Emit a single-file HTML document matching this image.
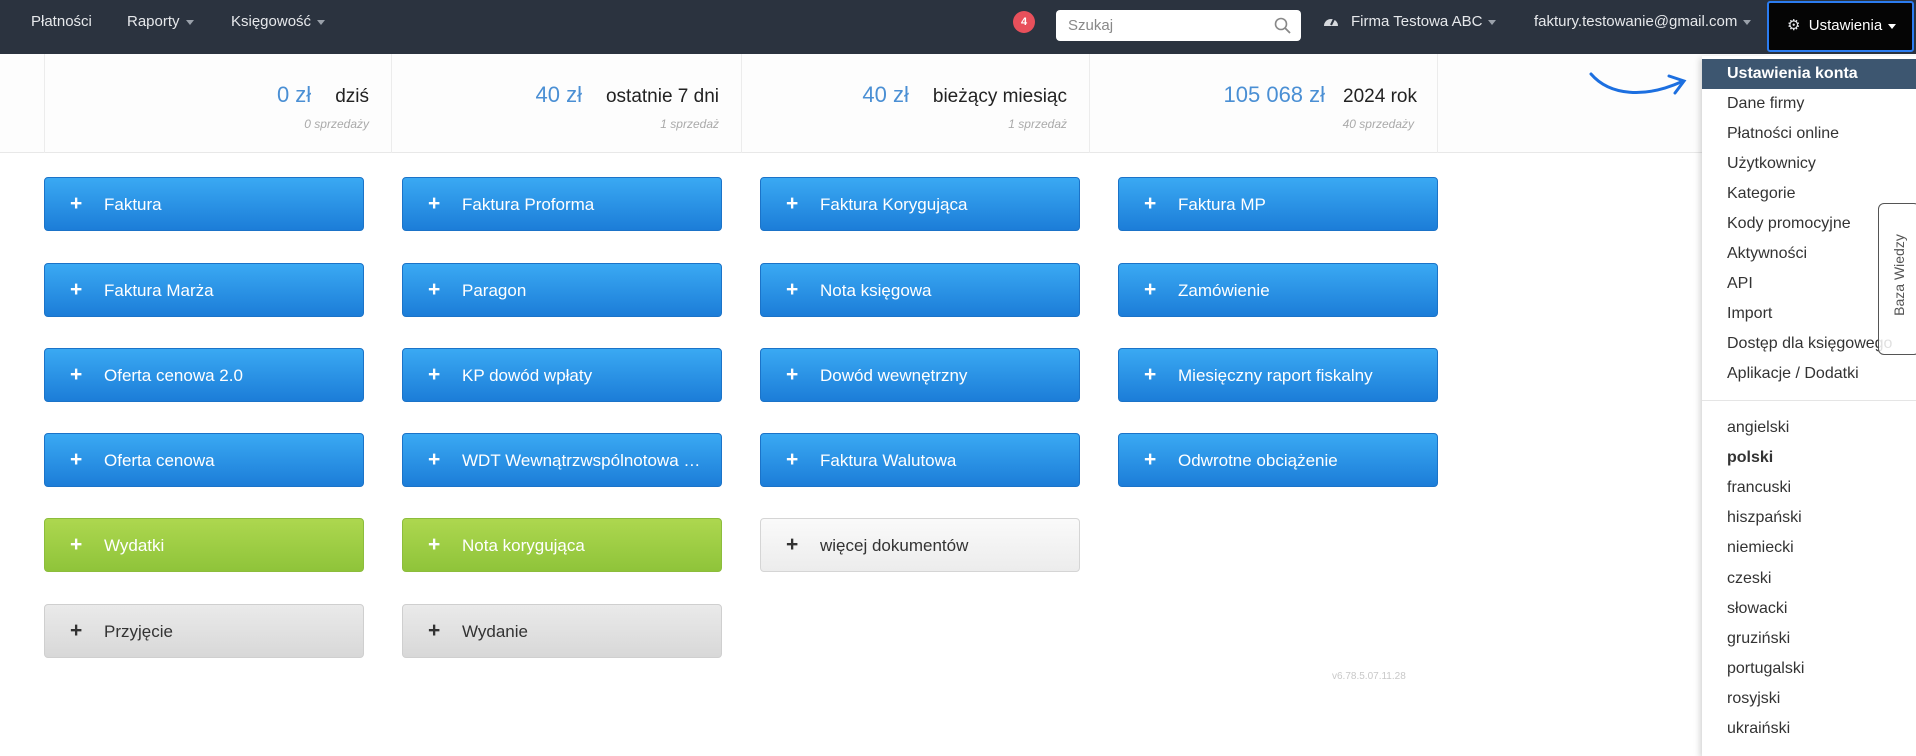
<!DOCTYPE html>
<html><head><meta charset="utf-8"><style>
*{box-sizing:border-box;margin:0;padding:0}
body{width:1916px;height:750px;overflow:hidden;background:#fff;font-family:"Liberation Sans",sans-serif;position:relative}
.nav{position:absolute;left:0;top:0;width:1916px;height:54px;background:#2b333f}
.nav span{position:absolute;top:0;line-height:44px;color:#e6e8eb;font-size:15px}
.car{display:inline-block;border-left:4px solid transparent;border-right:4px solid transparent;border-top:5px solid #9aa1aa;margin-left:6px;vertical-align:middle}
.stats{position:absolute;left:0;top:54px;width:1916px;height:99px;background:#fdfdfd;border-bottom:1px solid #e8e8e8}
.col{position:absolute;top:0;height:99px;border-left:1px solid #ececec}
.row{position:absolute;right:22px;top:28px;display:flex;align-items:baseline;white-space:nowrap}
.v{font-size:22px;color:#4a8fd4;margin-right:24px}
.l{font-size:19px;color:#222}
.s{position:absolute;right:22px;top:63px;font-size:12px;color:#aaa;font-style:italic;white-space:nowrap}
.b{position:absolute;width:320px;height:54px;border-radius:4px;color:#fff;font-size:17px;line-height:54px;padding-left:59px;background:linear-gradient(#3aa9f3,#1c7dd8);border:1px solid #1b73c8;white-space:nowrap;overflow:hidden}
.b:before{content:"+";position:absolute;left:25px;top:-1px;font-weight:bold;font-size:21px}
.g{background:linear-gradient(#add74f,#8fc43a);border-color:#8cbd3c}
.w{background:linear-gradient(#fafafa,#ececec);border-color:#d5d5d5;color:#333}
.gr{background:linear-gradient(#eaeaea,#d8d8d8);border-color:#cfcfcf;color:#333}
.dd{position:absolute;left:1702px;top:56px;width:214px;height:700px;background:#fff;box-shadow:-2px 2px 6px rgba(0,0,0,.18)}
.dd div{position:absolute;left:0;width:214px;height:30px;line-height:30px;padding-left:25px;font-size:16px;color:#333}
</style></head><body>
<div class="nav">
<span style="left:31px">Płatności</span>
<span style="left:127px">Raporty<i class="car"></i></span>
<span style="left:231px">Księgowość<i class="car"></i></span>
<div style="position:absolute;left:1013px;top:11px;width:22px;height:22px;border-radius:50%;background:#e8505b;color:#fff;font-size:11px;font-weight:bold;text-align:center;line-height:22px">4</div>
<div style="position:absolute;left:1056px;top:10px;width:245px;height:31px;background:#fff;border-radius:4px;color:#888;font-size:15px;line-height:31px;padding-left:12px">Szukaj
<svg style="position:absolute;right:10px;top:7px" width="17" height="17" viewBox="0 0 17 17"><circle cx="7" cy="7" r="5.5" fill="none" stroke="#888" stroke-width="1.6"/><path d="M11 11l5 5" stroke="#888" stroke-width="1.8"/></svg></div>
<span style="left:1323px"><svg width="16" height="14" viewBox="0 0 16 14" style="vertical-align:-2px"><path d="M1 12A7 7 0 0 1 15 12Z" fill="#d6d9dd"/><path d="M8 11L11 5" stroke="#2b333f" stroke-width="2"/></svg></span>
<span style="left:1351px">Firma Testowa ABC<i class="car"></i></span>
<span style="left:1534px">faktury.testowanie@gmail.com<i class="car"></i></span>
<div style="position:absolute;left:1767px;top:1px;width:147px;height:51px;background:#050505;border:2px solid #2b7cf0;border-radius:3px;color:#fff;font-size:15px;line-height:46px;padding-left:18px"><span style="position:static;font-size:15px;line-height:46px">⚙</span>&nbsp; Ustawienia<i class="car" style="border-top-color:#fff"></i></div>
</div>
<div class="stats">
<div class="col" style="left:44px;width:347px"><div class="row"><span class="v">0 zł</span><span class="l">dziś</span></div><div class="s">0 sprzedaży</div></div>
<div class="col" style="left:391px;width:350px"><div class="row"><span class="v">40 zł</span><span class="l">ostatnie 7 dni</span></div><div class="s">1 sprzedaż</div></div>
<div class="col" style="left:741px;width:348px"><div class="row"><span class="v">40 zł</span><span class="l">bieżący miesiąc</span></div><div class="s">1 sprzedaż</div></div>
<div class="col" style="left:1089px;width:349px;border-right:1px solid #ececec"><div class="row" style="right:20px"><span class="v" style="margin-right:18px">105 068 zł</span><span class="l">2024 rok</span></div><div class="s" style="right:23px">40 sprzedaży</div></div>
</div>
<div class="b" style="left:44px;top:177px">Faktura</div>
<div class="b" style="left:402px;top:177px">Faktura Proforma</div>
<div class="b" style="left:760px;top:177px">Faktura Korygująca</div>
<div class="b" style="left:1118px;top:177px">Faktura MP</div>
<div class="b" style="left:44px;top:263px">Faktura Marża</div>
<div class="b" style="left:402px;top:263px">Paragon</div>
<div class="b" style="left:760px;top:263px">Nota księgowa</div>
<div class="b" style="left:1118px;top:263px">Zamówienie</div>
<div class="b" style="left:44px;top:348px">Oferta cenowa 2.0</div>
<div class="b" style="left:402px;top:348px">KP dowód wpłaty</div>
<div class="b" style="left:760px;top:348px">Dowód wewnętrzny</div>
<div class="b" style="left:1118px;top:348px">Miesięczny raport fiskalny</div>
<div class="b" style="left:44px;top:433px">Oferta cenowa</div>
<div class="b" style="left:402px;top:433px">WDT Wewnątrzwspólnotowa …</div>
<div class="b" style="left:760px;top:433px">Faktura Walutowa</div>
<div class="b" style="left:1118px;top:433px">Odwrotne obciążenie</div>
<div class="b g" style="left:44px;top:518px">Wydatki</div>
<div class="b g" style="left:402px;top:518px">Nota korygująca</div>
<div class="b w" style="left:760px;top:518px">więcej dokumentów</div>
<div class="b gr" style="left:44px;top:604px">Przyjęcie</div>
<div class="b gr" style="left:402px;top:604px">Wydanie</div>
<div style="position:absolute;left:1332px;top:671px;font-size:10px;color:#c8c8c8">v6.78.5.07.11.28</div>
<svg style="position:absolute;left:1585px;top:64px" width="110" height="40" viewBox="0 0 110 40"><path d="M6 10C25 32 60 34 96 18" fill="none" stroke="#1c6fe0" stroke-width="3" stroke-linecap="round"/><path d="M84 12L99 17L90 29" fill="none" stroke="#1c6fe0" stroke-width="3" stroke-linecap="round"/></svg>
<div class="dd">
<div style="top:3px;background:#3d5670;color:#fff;font-weight:bold">Ustawienia konta</div>
<div style="top:33px">Dane firmy</div>
<div style="top:63px">Płatności online</div>
<div style="top:93px">Użytkownicy</div>
<div style="top:123px">Kategorie</div>
<div style="top:153px">Kody promocyjne</div>
<div style="top:183px">Aktywności</div>
<div style="top:213px">API</div>
<div style="top:243px">Import</div>
<div style="top:273px">Dostęp dla księgowego</div>
<div style="top:303px">Aplikacje / Dodatki</div>
<div style="top:344px;height:1px;background:#e5e5e5;padding:0"></div>
<div style="top:357px">angielski</div>
<div style="top:387px;font-weight:bold">polski</div>
<div style="top:417px">francuski</div>
<div style="top:447px">hiszpański</div>
<div style="top:477px">niemiecki</div>
<div style="top:508px">czeski</div>
<div style="top:538px">słowacki</div>
<div style="top:568px">gruziński</div>
<div style="top:598px">portugalski</div>
<div style="top:628px">rosyjski</div>
<div style="top:658px">ukraiński</div>
</div>
<div style="position:absolute;left:1878px;top:203px;width:42px;height:152px;background:rgba(255,255,255,.85);border:1px solid #555;border-radius:6px"><div style="position:absolute;left:-30px;top:63px;width:100px;transform:rotate(-90deg);font-size:14px;color:#555;text-align:center">Baza Wiedzy</div></div>
</body></html>
